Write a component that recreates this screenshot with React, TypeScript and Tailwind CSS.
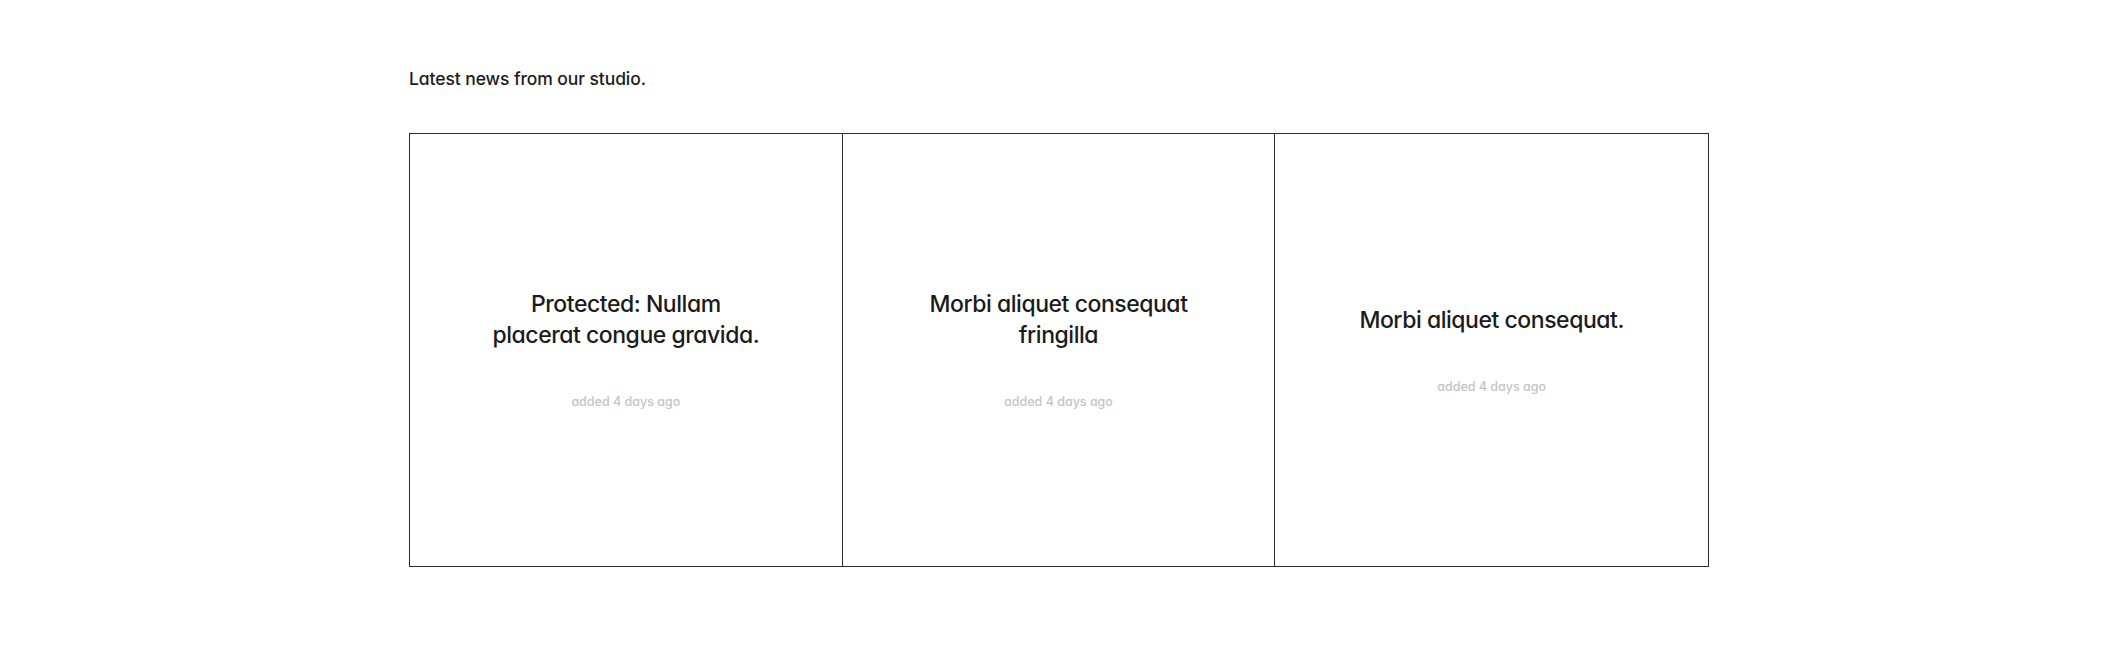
import React from "react";

const posts = [
  { title: "Protected: Nullam placerat congue gravida.", date: "added 4 days ago" },
  { title: "Morbi aliquet consequat fringilla", date: "added 4 days ago" },
  { title: "Morbi aliquet consequat.", date: "added 4 days ago" },
];

export default function App() {
  return (
    <div
      className="min-h-[646px] w-full bg-white pl-[409px] pt-[68px] text-[#1b1b1b]"
      style={{ fontFamily: "Inter, 'Noto Sans', sans-serif" }}
    >
      <h2 className="text-[17.5px] font-medium leading-[22px] tracking-[-0.005em] [font-feature-settings:'cv11']">
        Latest news from our studio.
      </h2>
      <div className="mt-[43px] grid h-[434px] w-[1300px] grid-cols-3 border border-[#2a2a2a]">
        {posts.map((p, i) => (
          <div
            key={i}
            className={`flex flex-col items-center justify-center px-10 text-center ${i < 2 ? "border-r border-[#2a2a2a]" : ""}`}
          >
            <h3 className="max-w-[275px] text-[23px] font-medium leading-[31px] tracking-[-0.02em] [font-feature-settings:'cv11']">
              {p.title}
            </h3>
            <p className="mt-[42px] text-[12.5px] font-medium leading-[18px] text-[#c4c4c4] [font-feature-settings:'cv11']">
              {p.date}
            </p>
          </div>
        ))}
      </div>
    </div>
  );
}
